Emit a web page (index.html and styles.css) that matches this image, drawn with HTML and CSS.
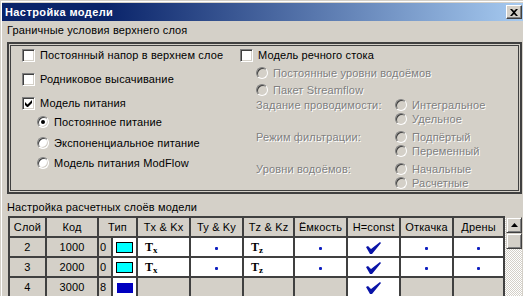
FILE: index.html
```html
<!DOCTYPE html>
<html lang="ru">
<head>
  <meta charset="UTF-8">
  <title>Настройка модели</title>
  <link rel="stylesheet" href="styles.css">
</head>
<body>
  <div class="window">
    <!-- Title bar -->
    <div class="titlebar">
      <span class="title">Настройка модели</span>
      <div class="close">
        <svg width="8" height="7" viewBox="0 0 8 7"><path d="M0 0h2l2 2 2-2h2L5 3.5 8 7H6L4 5 2 7H0l3-3.5z" fill="#000"/></svg>
      </div>
    </div>

    <div class="content">
      <div class="section-label">Граничные условия верхнего слоя</div>

      <!-- Top layer boundary conditions -->
      <div class="group">
        <div class="col-left">
          <label class="row check-row"><span class="checkbox"></span>Постоянный напор в верхнем слое</label>
          <label class="row check-row"><span class="checkbox"></span>Родниковое высачивание</label>
          <label class="row check-row"><span class="checkbox checked"><svg width="7" height="7" viewBox="0 0 7 7"><path d="M0 2v3l2 2h1l4-4V0L2.5 4.5z" fill="#000"/></svg></span>Модель питания</label>
          <label class="row radio-row"><span class="radio selected"></span>Постоянное питание</label>
          <label class="row radio-row"><span class="radio"></span>Экспоненциальное питание</label>
          <label class="row radio-row"><span class="radio"></span>Модель питания ModFlow</label>
        </div>

        <div class="col-right">
          <label class="row check-row"><span class="checkbox"></span>Модель речного стока</label>
          <div class="sub disabled">
            <label class="row sub-row"><span class="radio off"></span>Постоянные уровни водоёмов</label>
            <label class="row sub-row"><span class="radio off"></span>Пакет Streamflow</label>

            <div class="prop">
              <span class="prop-name">Задание проводимости:</span>
              <div class="prop-options">
                <label class="row opt-row"><span class="radio off"></span>Интегральное</label>
                <label class="row opt-row"><span class="radio off"></span>Удельное</label>
              </div>
            </div>
            <div class="prop">
              <span class="prop-name">Режим фильтрации:</span>
              <div class="prop-options">
                <label class="row opt-row"><span class="radio off"></span>Подпёртый</label>
                <label class="row opt-row"><span class="radio off"></span>Переменный</label>
              </div>
            </div>
            <div class="prop">
              <span class="prop-name">Уровни водоёмов:</span>
              <div class="prop-options">
                <label class="row opt-row"><span class="radio off"></span>Начальные</label>
                <label class="row opt-row"><span class="radio off"></span>Расчетные</label>
              </div>
            </div>
          </div>
        </div>
      </div>

      <div class="section-label second">Настройка расчетных слоёв модели</div>

      <!-- Layers grid -->
      <div class="grid-wrap">
        <table class="layers">
          <colgroup>
            <col style="width:35px"><col style="width:50px"><col style="width:12px"><col style="width:23px">
            <col style="width:51px"><col style="width:51px"><col style="width:49px"><col style="width:51px">
            <col style="width:51px"><col style="width:51px"><col style="width:49px">
          </colgroup>
          <thead>
            <tr>
              <th>Слой</th><th>Код</th><th colspan="2">Тип</th><th>Tx &amp; Kx</th><th>Ty &amp; Ky</th>
              <th>Tz &amp; Kz</th><th>Ёмкость</th><th>H=const</th><th>Откачка</th><th>Дрены</th>
            </tr>
          </thead>
          <tbody id="rows"></tbody>
        </table>
        <div class="scrollbar">
          <div class="sb-btn"><svg width="7" height="4" viewBox="0 0 7 4"><path d="M3.5 0L7 4H0z" fill="#000"/></svg></div>
          <div class="sb-thumb"></div>
        </div>
      </div>
    </div>
  </div>

  <script>
    // ---------------------------
    // LAYER ROWS
    // ---------------------------
    const layers = [
      { n: 2, code: 1000, type: 0, color: 'cyan', full: true },
      { n: 3, code: 2000, type: 0, color: 'cyan', full: true },
      { n: 4, code: 3000, type: 8, color: 'blue', full: false }
    ];

    const dot = '<span class="dot"></span>';
    const tick = '<svg class="tick" width="15" height="12" viewBox="0 0 15 12"><path d="M0 5l2-1 3 3 9-7 1 1-9 11h-2z" fill="#0a14a8"/></svg>';

    function cell(html, cls) {
      return '<td class="' + cls + '">' + html + '</td>';
    }

    const tbody = document.getElementById('rows');
    layers.forEach(l => {
      let row = '<tr>';
      row += cell(l.n, 'fixed center');
      row += cell(l.code, 'fixed center');
      row += cell(l.type, 'fixed type-num');
      row += cell('<span class="swatch ' + l.color + '"></span>', 'white center');
      if (l.full) {
        row += cell('<span class="tk">T<sub>x</sub></span>', 'white');
        row += cell(dot, 'white center');
        row += cell('<span class="tk">T<sub>z</sub></span>', 'white');
        row += cell(dot, 'white center');
        row += cell(tick, 'white center');
        row += cell(dot, 'white center');
        row += cell(dot, 'white center');
      } else {
        row += cell('', 'fixed') + cell('', 'fixed') + cell('', 'fixed') + cell('', 'fixed');
        row += cell(tick, 'white center');
        row += cell('', 'fixed') + cell('', 'fixed');
      }
      row += '</tr>';
      tbody.insertAdjacentHTML('beforeend', row);
    });
  </script>
</body>
</html>
```

FILE: styles.css
```css
/* Basic dialog styling */
body {
  margin: 0;
  background: #d4d0c8;
  font-family: "Liberation Sans", Arial, sans-serif;
  font-size: 11px;
  letter-spacing: 0.15px;
  color: #000;
  overflow: hidden;
}
.window {
  width: 523px;
  height: 296px;
  box-sizing: border-box;
  padding: 3px 0 0 2px;
  box-shadow: inset 1px 1px 0 #d4d0c8, inset 2px 2px 0 #fff;
  overflow: hidden;
}
/* Title bar */
.titlebar {
  height: 18px;
  display: flex;
  align-items: center;
  justify-content: space-between;
  padding: 0 1px 0 3px;
  background: linear-gradient(90deg, #0a246a 0%, #0a246a 20%, #a6caf0 100%);
}
.title {
  color: #fff;
  font-weight: bold;
  font-size: 11px;
  letter-spacing: 0.4px;
}
.close {
  width: 16px;
  height: 14px;
  box-sizing: border-box;
  background: #d4d0c8;
  border: 1px solid;
  border-color: #fff #404040 #404040 #fff;
  box-shadow: inset -1px -1px 0 #808080;
  display: flex;
  align-items: center;
  justify-content: center;
}
.content {
  padding: 0 1px 0 5px;
}
.section-label {
  height: 21px;
  line-height: 13px;
  padding-top: 3px;
  box-sizing: border-box;
}
.section-label.second {
  height: 22px;
  padding-top: 7px;
}
/* Group box */
.group {
  height: 152px;
  box-sizing: border-box;
  border: 2px solid #404040;
  box-shadow: inset 0 0 0 1px #d4d0c8, inset 0 0 0 2px #404040;
  padding: 1px 0 0 13px;
  display: flex;
  overflow: hidden;
}
.col-left {
  flex: none;
  width: 218px;
  display: flex;
  flex-direction: column;
}
.col-right {
  display: flex;
  flex-direction: column;
}
.row {
  display: flex;
  align-items: center;
  flex-shrink: 0;
  white-space: nowrap;
}
.check-row {
  height: 20px;
  margin-bottom: 4px;
  gap: 5px;
}
.col-left .check-row:nth-child(3) {
  margin-bottom: -1px;
}
.radio-row {
  height: 20.5px;
  padding-left: 15px;
  gap: 5px;
}
.col-right .check-row {
  margin-bottom: -1px;
}
.sub {
  flex-shrink: 0;
  padding-left: 16px;
}
.sub-row {
  height: 17px;
  gap: 5px;
}
.prop {
  display: flex;
  flex-shrink: 0;
  margin-bottom: 4px;
}
.prop-name {
  width: 139px;
  line-height: 14px;
}
.opt-row {
  height: 14px;
  gap: 5px;
}
.disabled {
  color: #808080;
  text-shadow: 1px 1px 0 #fff;
}
/* Checkbox and radio controls */
.checkbox {
  width: 13px;
  height: 13px;
  box-sizing: border-box;
  flex: none;
  background: #fff;
  border: 1px solid;
  border-color: #808080 #fff #fff #808080;
  box-shadow: inset 1px 1px 0 #404040, inset -1px -1px 0 #d4d0c8;
  display: flex;
  align-items: center;
  justify-content: center;
}
.radio {
  position: relative;
  width: 12px;
  height: 12px;
  box-sizing: border-box;
  flex: none;
  border-radius: 50%;
  background: #fff;
  border: 1px solid;
  border-color: #808080 #fff #fff #808080;
  box-shadow: inset 1px 1px 0 #404040, inset -1px -1px 0 #d4d0c8;
}
.radio.off {
  background: #d4d0c8;
}
.radio.selected::after {
  content: "";
  position: absolute;
  left: 3px;
  top: 3px;
  width: 4px;
  height: 4px;
  border-radius: 50%;
  background: #000;
}
/* Layers grid */
.grid-wrap {
  display: flex;
  align-items: flex-start;
  padding-left: 1px;
}
.layers {
  table-layout: fixed;
  width: 497px;
  border-collapse: separate;
  border-spacing: 2px;
  background: #404040;
}
.layers th,
.layers td {
  height: 18px;
  padding: 0;
  font-weight: normal;
  overflow: hidden;
  white-space: nowrap;
}
.layers th {
  background: #d4d0c8;
  text-align: center;
}
.layers td.fixed {
  background: #d4d0c8;
}
.layers td.white {
  background: #fff;
}
.center {
  text-align: center;
}
.type-num {
  padding-left: 1px !important;
}
.swatch {
  display: inline-block;
  vertical-align: middle;
  width: 17px;
  height: 11px;
  box-sizing: border-box;
}
.swatch.cyan {
  background: #00ffff;
  border: 1px solid #000;
}
.swatch.blue {
  width: 16px;
  height: 10px;
  background: #0000c0;
}
.tk {
  padding-left: 7px;
  font-family: "Liberation Serif", serif;
  font-weight: bold;
  font-size: 12px;
  letter-spacing: 0;
}
.tk sub {
  font-size: 9px;
  vertical-align: -2px;
}
.dot {
  display: inline-block;
  width: 3px;
  height: 3px;
  background: #1020c0;
  border-radius: 1px;
  vertical-align: middle;
}
.tick {
  vertical-align: middle;
}
/* Scrollbar */
.scrollbar {
  width: 17px;
  height: 80px;
  margin-top: 1px;
  display: flex;
  flex-direction: column;
  align-items: flex-end;
  background: repeating-conic-gradient(#fff 0 25%, #d4d0c8 0 50%) 0 0 / 2px 2px;
}
.sb-btn,
.sb-thumb {
  width: 16px;
  height: 16px;
  box-sizing: border-box;
  background: #d4d0c8;
  border: 1px solid;
  border-color: #d4d0c8 #404040 #404040 #d4d0c8;
  box-shadow: inset 1px 1px 0 #fff, inset -1px -1px 0 #808080;
  display: flex;
  align-items: center;
  justify-content: center;
}
```
